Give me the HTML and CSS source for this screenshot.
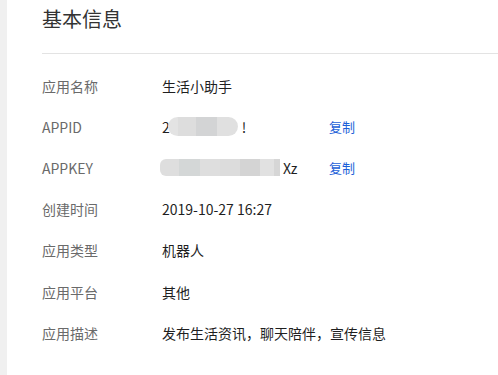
FILE: index.html
```html
<!DOCTYPE html>
<html lang="zh-CN">
<head>
<meta charset="utf-8">
<title>基本信息</title>
<link rel="stylesheet" href="styles.css">
</head>
<body>
<div class="layout">
  <aside class="side"></aside>
  <main class="main">
    <h1 class="title">基本信息</h1>
    <div class="rows">
      <div class="row"><span class="label">应用名称</span><span class="value">生活小助手</span></div>
      <div class="row"><span class="label">APPID</span><span class="value"><span>2</span><span class="blob blob-id"></span><span>!</span></span><a class="copy">复制</a></div>
      <div class="row"><span class="label">APPKEY</span><span class="value"><span class="blob blob-key"></span><span class="tail">Xz</span></span><a class="copy">复制</a></div>
      <div class="row"><span class="label">创建时间</span><span class="value">2019-10-27 16:27</span></div>
      <div class="row"><span class="label">应用类型</span><span class="value">机器人</span></div>
      <div class="row"><span class="label">应用平台</span><span class="value">其他</span></div>
      <div class="row"><span class="label">应用描述</span><span class="value">发布生活资讯，聊天陪伴，宣传信息</span></div>
    </div>
  </main>
</div>
</body>
</html>
```
FILE: styles.css
```css
html, body {
  margin: 0;
  padding: 0;
  background: #ffffff;
  font-family: "Noto Sans CJK SC", "Noto Sans", sans-serif;
}
.layout {
  display: flex;
  min-height: 375px;
}
.side {
  width: 7px;
  flex: none;
  background: #f0f0f0;
}
.main {
  flex: 1;
  padding-left: 35px;
}
.title {
  margin: 0;
  padding: 5px 0 20px;
  font-size: 20px;
  line-height: 28px;
  font-weight: normal;
  color: #333333;
  border-bottom: 1px solid #e3e3e3;
}
.rows {
  padding-top: 11px;
}
.row {
  display: flex;
  align-items: center;
  height: 41.2px;
  font-size: 14px;
  line-height: 20px;
}
.label {
  width: 120px;
  flex: none;
  color: #6a6a6a;
}
.value {
  width: 167px;
  flex: none;
  color: #1f1f1f;
  white-space: nowrap;
  display: flex;
  align-items: center;
}
.blob {
  display: inline-block;
  height: 19px;
}
.blob-id {
  width: 70px;
  margin-left: -2px;
  margin-right: 4px;
  border-radius: 10px;
  background: linear-gradient(to right, #e3e3e3 0 14%, #dddddd 14% 40%, #d3d4d5 40% 70%, #e0e0e0 70% 100%);
}
.blob-key {
  width: 120px;
  height: 17px;
  margin-left: -2px;
  margin-right: 3px;
  border-radius: 6px 0 0 6px;
  background: linear-gradient(to right, #dedede 0 16%, #d4d7d7 16% 33%, #dedede 33% 50%, #dcdcdc 50% 67%, #d4d4d4 67% 83%, #e1e1e1 83% 95%, #d6d6d6 95% 100%);
}
.copy {
  font-size: 13px;
  color: #1d5fd8;
  cursor: pointer;
}
```
